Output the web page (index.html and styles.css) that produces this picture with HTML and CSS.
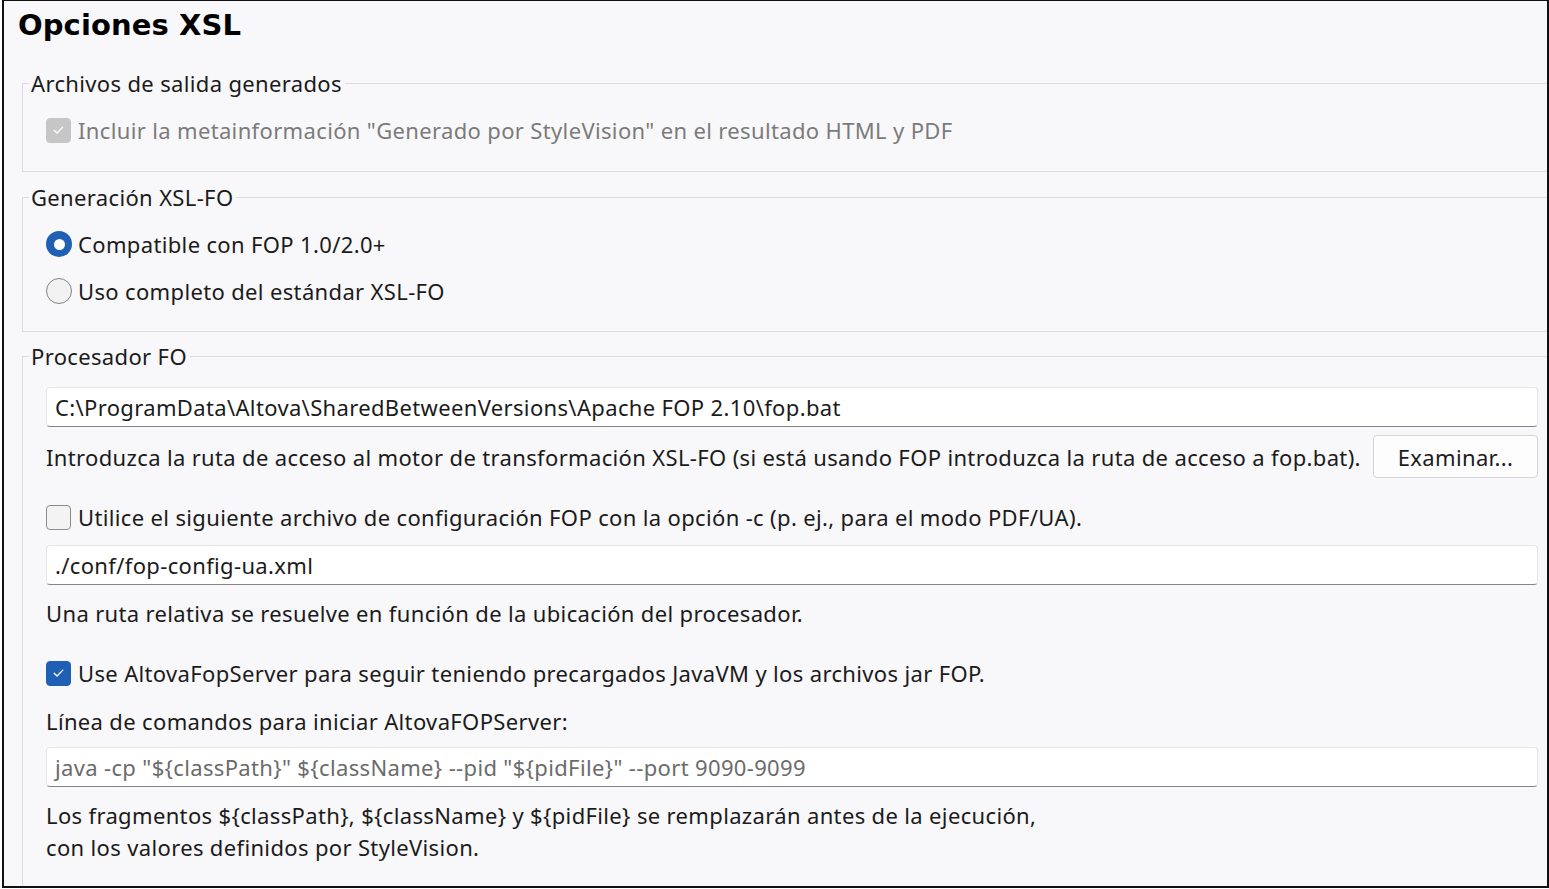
FILE: index.html
```html
<!DOCTYPE html>
<html lang="es">
<head>
<meta charset="utf-8">
<title>Opciones XSL</title>
<link rel="stylesheet" href="styles.css">
</head>
<body>
<div class="frame">
  <h1 class="title">Opciones XSL</h1>

  <fieldset class="group g1">
    <legend>Archivos de salida generados</legend>
    <div class="content">
      <div class="row">
        <span class="check disabled"><svg viewBox="0 0 24 24"><path d="M7.5 12.2l3 3 6-6.2" /></svg></span>
        <span class="label muted">Incluir la metainformación "Generado por StyleVision" en el resultado HTML y PDF</span>
      </div>
    </div>
  </fieldset>

  <fieldset class="group g2">
    <legend>Generación XSL-FO</legend>
    <div class="content">
      <div class="row">
        <span class="radio on"></span>
        <span class="label">Compatible con FOP 1.0/2.0+</span>
      </div>
      <div class="row r2">
        <span class="radio"></span>
        <span class="label">Uso completo del estándar XSL-FO</span>
      </div>
    </div>
  </fieldset>

  <fieldset class="group g3">
    <legend>Procesador FO</legend>
    <div class="content">
      <div class="input i1">C:\ProgramData\Altova\SharedBetweenVersions\Apache FOP 2.10\fop.bat</div>
      <div class="desc-row">
        <span class="text">Introduzca la ruta de acceso al motor de transformación XSL-FO (si está usando FOP introduzca la ruta de acceso a fop.bat).</span>
        <button class="btn">Examinar...</button>
      </div>
      <div class="row cfg">
        <span class="check"></span>
        <span class="label">Utilice el siguiente archivo de configuración FOP con la opción -c (p. ej., para el modo PDF/UA).</span>
      </div>
      <div class="input i2">./conf/fop-config-ua.xml</div>
      <div class="row note">
        <span class="text">Una ruta relativa se resuelve en función de la ubicación del procesador.</span>
      </div>
      <div class="row srv">
        <span class="check checked"><svg viewBox="0 0 24 24"><path d="M7.5 12.2l3 3 6-6.2" /></svg></span>
        <span class="label">Use AltovaFopServer para seguir teniendo precargados JavaVM y los archivos jar FOP.</span>
      </div>
      <div class="row cmd">
        <span class="text">Línea de comandos para iniciar AltovaFOPServer:</span>
      </div>
      <div class="input i3 placeholder">java -cp "${classPath}" ${className} --pid "${pidFile}" --port 9090-9099</div>
      <p class="para">Los fragmentos ${classPath}, ${className} y ${pidFile} se remplazarán antes de la ejecución,<br>con los valores definidos por StyleVision.</p>
    </div>
  </fieldset>
</div>
</body>
</html>
```

FILE: styles.css
```css
* { box-sizing: border-box; }

html, body {
  margin: 0;
  padding: 0;
  background: #ffffff;
}

body {
  font-family: "Noto Sans", "Open Sans", sans-serif;
  font-size: 22px;
  letter-spacing: 0.35px;
  color: #1b1b1b;
}

.frame {
  margin-left: 2px;
  width: 1547px;
  height: 888px;
  border: 2px solid #111;
  border-top-width: 1px;
  background: #f8f7f9;
  overflow: hidden;
}

.title {
  margin: 0 0 0 14px;
  height: 46px;
  padding-top: 4px;
  font-family: "DejaVu Sans", "Noto Sans", sans-serif;
  font-size: 29px;
  letter-spacing: 0.1px;
  line-height: 40px;
  font-weight: 700;
  color: #000;
}

.group {
  border: 1px solid #dcdcdc;
  margin: 0 -14px 0 18px;
  padding: 0;
  min-width: 0;
}

.group legend {
  margin-left: 6px;
  padding: 0 3px 0 2px;
  line-height: 28px;
  height: 28px;
}

.g1 { margin-top: 22px; }
.g2 { margin-top: 11px; }
.g3 { margin-top: 10px; }

.content {
  padding: 0 22px 0 23px;
  display: flex;
  flex-direction: column;
}

.g1 .content { padding-top: 13px; padding-bottom: 21px; }
.g2 .content { padding-top: 13px; padding-bottom: 20px; }
.g3 .content { padding-top: 17px; padding-bottom: 40px; }

.row {
  display: flex;
  align-items: center;
  height: 40px;
}

.row.r2 { margin-top: 7px; }

.label { margin-left: 7px; white-space: nowrap; }
.muted { color: #7b7b7b; }

.check {
  flex: none;
  width: 25px;
  height: 25px;
  border-radius: 4px;
  border: 1px solid #8b8b8b;
  background: #f3f3f3;
  display: flex;
  align-items: center;
  justify-content: center;
}

.check svg { width: 24px; height: 24px; }
.check svg path {
  fill: none;
  stroke: #fff;
  stroke-width: 1.4;
  stroke-linecap: round;
  stroke-linejoin: round;
}

.check.disabled {
  background: #c6c6c6;
  border-color: #c6c6c6;
}

.check.checked {
  background: #1f5fb4;
  border-color: #1f5fb4;
}

.radio {
  flex: none;
  width: 26px;
  height: 26px;
  border-radius: 50%;
  border: 1px solid #858585;
  background: #f2f2f2;
  display: flex;
  align-items: center;
  justify-content: center;
}

.radio.on {
  border: none;
  background: #1f5fb4;
}

.radio.on::after {
  content: "";
  width: 11px;
  height: 11px;
  border-radius: 50%;
  background: #fff;
}

.radio + .label { margin-left: 6px; }

.input {
  height: 40px;
  background: #fff;
  border: 1px solid #e6e6e6;
  border-bottom-color: #868686;
  border-radius: 4px;
  padding: 0 8px;
  display: flex;
  align-items: center;
  white-space: nowrap;
}

.input.placeholder { color: #6b6b6b; }

.desc-row {
  display: flex;
  align-items: center;
  justify-content: space-between;
  height: 43px;
  margin-top: 8px;
}

.text { white-space: nowrap; }

.btn {
  flex: none;
  width: 165px;
  height: 43px;
  font: inherit;
  letter-spacing: inherit;
  color: #1b1b1b;
  background: #fdfdfd;
  border: 1px solid #d4d4d4;
  border-radius: 4px;
  padding: 0;
}

.row.cfg { margin-top: 19px; }
.input.i2 { margin-top: 8px; }
.row.note { margin-top: 8px; }
.row.srv { margin-top: 20px; }
.row.cmd { margin-top: 8px; }
.input.i3 { margin-top: 6px; }

.para {
  margin: 12px 0 0;
  line-height: 32px;
}
```
